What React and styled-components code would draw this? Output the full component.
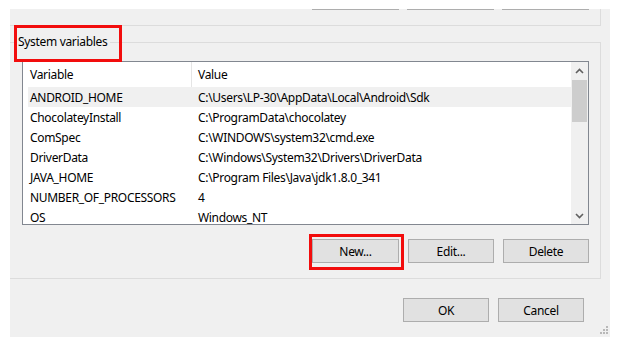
import React from "react";
import styled, { createGlobalStyle } from "styled-components";

const Global = createGlobalStyle`
  html, body { margin: 0; padding: 0; background: #ffffff; }
  body {
    font-family: "Noto Sans", "Segoe UI", sans-serif;
    font-size: 12px;
    letter-spacing: -0.32px;
    color: #000;
  }
`;

const Dialog = styled.div`
  position: relative;
  margin: 9px 0 0 10px;
  width: 600px;
  height: 328px;
  background: #f0f0f0;
  overflow: hidden;
  display: flex;
  flex-direction: column;
  box-sizing: border-box;
  padding-right: 9px;
`;

const UserGroup = styled.div`
  height: 17px;
  box-sizing: border-box;
  border-right: 1px solid #dcdcdc;
  border-bottom: 1px solid #dcdcdc;
  display: flex;
  align-items: flex-start;
  justify-content: flex-end;
  gap: 8px;
  padding-right: 11px;
`;

const ButtonEdge = styled.div`
  width: 87px;
  height: 1px;
  background: #adadad;
`;

const ButtonRow = styled.div`
  display: flex;
  justify-content: flex-end;
  gap: ${(p) => p.$gap || 9}px;
  padding: ${(p) => p.$pad || "0"};
`;

const Button = styled.button`
  width: ${(p) => p.$w || 86}px;
  height: 24px;
  box-sizing: border-box;
  background: #e1e1e1;
  border: 1px solid #adadad;
  border-radius: 0;
  font-family: "Noto Sans", "Segoe UI", sans-serif;
  font-size: 12px;
  letter-spacing: -0.32px;
  color: #000;
  padding: 0;
  flex: none;
`;

const Highlighted = styled.div`
  position: relative;
  display: flex;
`;

const RedBox = styled.div`
  position: absolute;
  left: ${(p) => p.$l}px;
  top: ${(p) => p.$t}px;
  right: ${(p) => p.$r}px;
  bottom: ${(p) => p.$b}px;
  border: 3px solid #f20d0d;
  pointer-events: none;
`;

const SystemGroup = styled.div`
  margin-top: 16px;
  height: 237px;
  box-sizing: border-box;
  border: 1px solid #dcdcdc;
  border-left: none;
  display: flex;
  flex-direction: column;
`;

const Legend = styled.div`
  position: relative;
  width: fit-content;
  margin: -9px 0 0 5px;
  padding: 0 3px;
  line-height: 16px;
  background: #f0f0f0;
`;

const ListBox = styled.div`
  margin: 11px 11px 0 12px;
  height: 164px;
  box-sizing: border-box;
  border: 1px solid #828790;
  background: #ffffff;
  display: flex;
  overflow: hidden;
`;

const ListContent = styled.div`
  flex: 1;
  overflow: hidden;
`;

const Header = styled.div`
  display: grid;
  grid-template-columns: 169px 1fr;
  height: 25px;
  align-items: center;
`;

const HeaderCell = styled.div`
  height: 100%;
  display: flex;
  align-items: center;
  padding-left: ${(p) => p.$pad}px;
  border-right: ${(p) => (p.$divider ? "1px solid #e5e5e5" : "none")};
`;

const Row = styled.div`
  display: grid;
  grid-template-columns: 164px 1fr;
  margin-left: 5px;
  height: 20px;
  align-items: center;
  background: ${(p) => (p.$selected ? "#f0f0f0" : "transparent")};
  white-space: nowrap;
`;

const Cell = styled.div`
  padding-left: ${(p) => p.$pad}px;
`;

const ScrollBar = styled.div`
  width: 17px;
  background: #f0f0f0;
  display: flex;
  flex-direction: column;
`;

const Arrow = styled.div`
  height: 17px;
  display: flex;
  align-items: center;
  justify-content: center;
`;

const Track = styled.div`
  flex: 1;
  padding: 1px 1px 0 1px;
`;

const Thumb = styled.div`
  height: 42px;
  background: #cdcdcd;
`;

const Footer = styled.div`
  margin-top: 19px;
  display: flex;
  justify-content: flex-end;
  padding-right: 17px;
`;

const Grip = styled.svg`
  position: absolute;
  right: 1px;
  bottom: 2px;
`;

const rows = [
  ["ANDROID_HOME", "C:\\Users\\LP-30\\AppData\\Local\\Android\\Sdk"],
  ["ChocolateyInstall", "C:\\ProgramData\\chocolatey"],
  ["ComSpec", "C:\\WINDOWS\\system32\\cmd.exe"],
  ["DriverData", "C:\\Windows\\System32\\Drivers\\DriverData"],
  ["JAVA_HOME", "C:\\Program Files\\Java\\jdk1.8.0_341"],
  ["NUMBER_OF_PROCESSORS", "4"],
  ["OS", "Windows_NT"],
];

const Chevron = ({ down }) => (
  <svg width="9" height="6" viewBox="0 0 9 6">
    <path
      d={down ? "M1 1 L4.5 4.5 L8 1" : "M1 5 L4.5 1.5 L8 5"}
      fill="none"
      stroke="#606060"
      strokeWidth="1.6"
    />
  </svg>
);

export default function App() {
  return (
    <>
      <Global />
      <Dialog>
        <UserGroup>
          <ButtonEdge />
          <ButtonEdge />
          <ButtonEdge />
        </UserGroup>
        <SystemGroup>
          <Legend>
            System variables
            <RedBox $l={-1} $t={-9} $r={-12} $b={-12} />
          </Legend>
          <ListBox>
            <ListContent>
              <Header>
                <HeaderCell $pad={7} $divider>Variable</HeaderCell>
                <HeaderCell $pad={6}>Value</HeaderCell>
              </Header>
              {rows.map(([k, v], i) => (
                <Row key={k} $selected={i === 0}>
                  <Cell $pad={2}>{k}</Cell>
                  <Cell $pad={6}>{v}</Cell>
                </Row>
              ))}
            </ListContent>
            <ScrollBar>
              <Arrow><Chevron /></Arrow>
              <Track><Thumb /></Track>
              <Arrow><Chevron down /></Arrow>
            </ScrollBar>
          </ListBox>
          <ButtonRow $gap={9} $pad="14px 11px 0 0">
            <Highlighted>
              <Button $w={87}>New...</Button>
              <RedBox $l={-3} $t={-5} $r={-5} $b={-7} />
            </Highlighted>
            <Button>Edit...</Button>
            <Button>Delete</Button>
          </ButtonRow>
        </SystemGroup>
        <Footer>
          <ButtonRow $gap={9}>
            <Button>OK</Button>
            <Button>Cancel</Button>
          </ButtonRow>
        </Footer>
        <Grip width="10" height="10" viewBox="0 0 10 10">
          <g fill="#b8b8b8">
            <rect x="7" y="1" width="2" height="2" />
            <rect x="4" y="4" width="2" height="2" />
            <rect x="7" y="4" width="2" height="2" />
            <rect x="1" y="7" width="2" height="2" />
            <rect x="4" y="7" width="2" height="2" />
            <rect x="7" y="7" width="2" height="2" />
          </g>
        </Grip>
      </Dialog>
    </>
  );
}
